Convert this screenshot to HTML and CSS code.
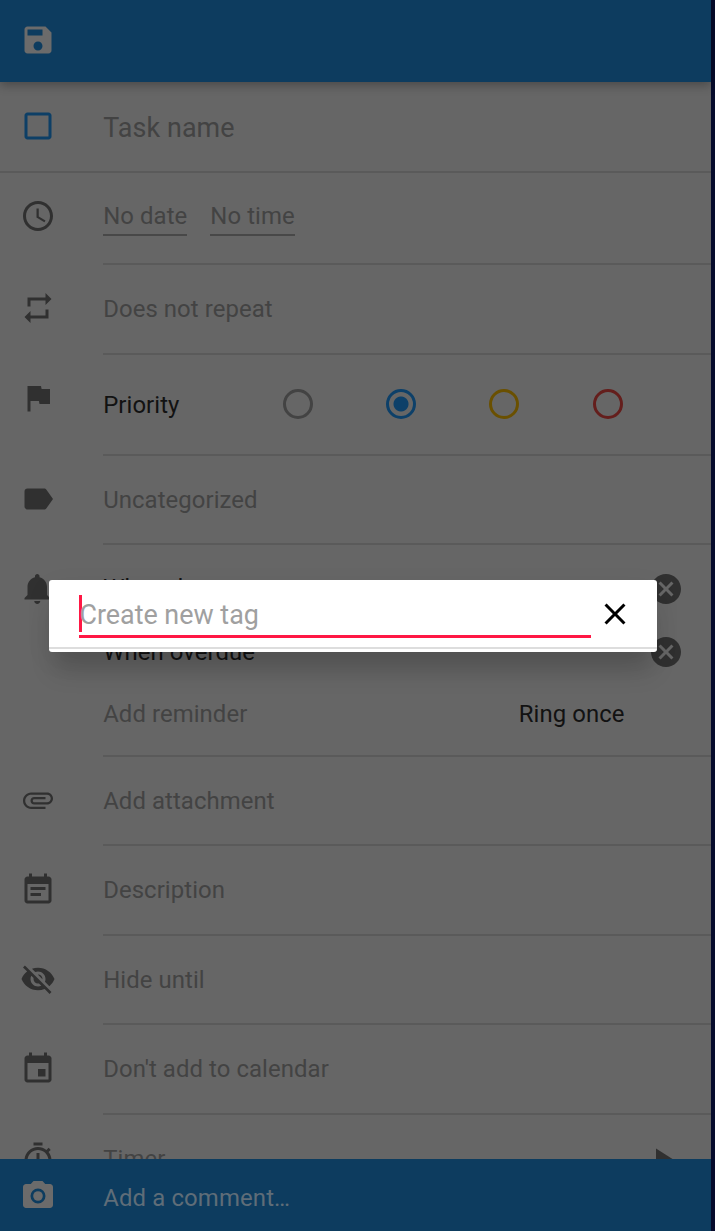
FILE: index.html
```html
<!DOCTYPE html>
<html lang="en">
<head>
<meta charset="utf-8">
<title>Task</title>
<link rel="stylesheet" href="styles.css">
</head>
<body>
<div class="screen">
  <header class="toolbar">
    <svg class="icon light" viewBox="0 0 24 24"><path d="M17 3H5c-1.110 0-2 .9-2 2v14c0 1.100.89 2 2 2h14c1.100 0 2-.9 2-2V7l-4-4zm-5 16c-1.660 0-3-1.340-3-3s1.340-3 3-3 3 1.340 3 3-1.340 3-3 3zm3-10H5V5h10v4z"/></svg>
  </header>
  <main class="rows">
    <section class="row title">
      <svg class="icon blue" viewBox="0 0 24 24"><path d="M19 5v14H5V5h14m0-2H5c-1.100 0-2 .9-2 2v14c0 1.100.9 2 2 2h14c1.100 0 2-.9 2-2V5c0-1.100-.9-2-2-2z"/></svg>
      <div class="cell"><span class="task-name">Task name</span></div>
    </section>
    <section class="row due">
      <svg class="icon" viewBox="0 0 24 24"><path d="M11.990 2C6.470 2 2 6.480 2 12s4.470 10 9.990 10C17.520 22 22 17.520 22 12S17.520 2 11.990 2zM12 20c-4.420 0-8-3.580-8-8s3.580-8 8-8 8 3.580 8 8-3.580 8-8 8zm.5-13H11v6l5.250 3.150.75-1.230-4.500-2.670z"/></svg>
      <div class="cell"><span class="underlined">No date</span><span class="underlined">No time</span></div>
    </section>
    <section class="row repeat">
      <svg class="icon" viewBox="0 0 24 24"><path d="M7 7h10v3l4-4-4-4v3H5v6h2V7zm10 10H7v-3l-4 4 4 4v-3h12v-6h-2v4z"/></svg>
      <div class="cell"><span class="hint">Does not repeat</span></div>
    </section>
    <section class="row priority">
      <svg class="icon" viewBox="0 0 24 24"><path d="M14.400 6L14 4H5v17h2v-7h5.600l.4 2h7V6z"/></svg>
      <div class="cell"><span class="strong">Priority</span>
        <div class="radios"><i class="radio none"></i><i class="radio low"></i><i class="radio medium"></i><i class="radio high"></i></div>
      </div>
    </section>
    <section class="row tag">
      <svg class="icon" viewBox="0 0 24 24"><path d="M17.630 5.840C17.270 5.330 16.670 5 16 5L5 5.010C3.900 5.010 3 5.900 3 7v10c0 1.100.9 1.990 2 1.990L16 19c.67 0 1.270-.33 1.630-.84L22 12l-4.370-6.160z"/></svg>
      <div class="cell"><span class="hint">Uncategorized</span></div>
    </section>
    <section class="row reminders">
      <svg class="icon" viewBox="0 0 24 24"><path d="M11.500 22c1.100 0 2-.9 2-2h-4c0 1.100.9 2 2 2zm6.500-6v-5.500c0-3.070-2.130-5.640-5-6.320V3.500c0-.83-.67-1.500-1.500-1.500S10 2.670 10 3.500v.68c-2.870.68-5 3.250-5 6.320V16l-2 2v1h17v-1l-2-2z"/></svg>
      <div class="cell">
        <div class="line"><span class="strong first">When due</span><svg class="icon" viewBox="0 0 24 24"><path d="M12 2C6.470 2 2 6.470 2 12s4.470 10 10 10 10-4.470 10-10S17.530 2 12 2zm5 13.590L15.590 17 12 13.410 8.410 17 7 15.590 10.590 12 7 8.410 8.410 7 12 10.590 15.590 7 17 8.410 13.410 12 17 15.590z"/></svg></div>
        <div class="line"><span class="strong">When overdue</span><svg class="icon" viewBox="0 0 24 24"><path d="M12 2C6.470 2 2 6.470 2 12s4.470 10 10 10 10-4.470 10-10S17.530 2 12 2zm5 13.590L15.590 17 12 13.410 8.410 17 7 15.590 10.590 12 7 8.410 8.410 7 12 10.590 15.590 7 17 8.410 13.410 12 17 15.590z"/></svg></div>
        <div class="line add"><span class="hint">Add reminder</span><span class="strong ring">Ring once</span></div>
      </div>
    </section>
    <section class="row attach">
      <svg class="icon" viewBox="0 0 24 24"><path d="M2 12.500C2 9.460 4.460 7 7.500 7H18c2.210 0 4 1.790 4 4s-1.790 4-4 4H9.500C8.120 15 7 13.880 7 12.500S8.120 10 9.500 10H17v1.500H9.500c-.55 0-1 .45-1 1s.45 1 1 1H18c1.380 0 2.500-1.120 2.500-2.500S19.380 8.500 18 8.500H7.500c-2.210 0-4 1.790-4 4s1.790 4 4 4H17V18H7.500C4.460 18 2 15.540 2 12.500z"/></svg>
      <div class="cell"><span class="hint">Add attachment</span></div>
    </section>
    <section class="row description">
      <svg class="icon" viewBox="0 0 24 24"><path d="M17 10H7v2h10v-2zm2-7h-1V1h-2v2H8V1H6v2H5c-1.110 0-1.990.9-1.990 2L3 19c0 1.100.89 2 2 2h14c1.100 0 2-.9 2-2V5c0-1.100-.9-2-2-2zm0 16H5V8h14v11zm-5-5H7v2h7v-2z"/></svg>
      <div class="cell"><span class="hint">Description</span></div>
    </section>
    <section class="row hide">
      <svg class="icon" viewBox="0 0 24 24"><path d="M12 7c2.760 0 5 2.240 5 5 0 .65-.13 1.260-.36 1.830l2.920 2.920c1.510-1.260 2.700-2.890 3.430-4.750-1.730-4.390-6-7.500-11-7.500-1.400 0-2.740.25-3.980.7l2.160 2.160C10.740 7.130 11.350 7 12 7zM2 4.270l2.280 2.280.46.46C3.080 8.300 1.780 10.020 1 12c1.730 4.390 6 7.500 11 7.500 1.550 0 3.030-.3 4.380-.84l.42.42L19.730 22 21 20.730 3.270 3 2 4.270zM7.530 9.800l1.550 1.550c-.05.21-.08.43-.08.65 0 1.660 1.340 3 3 3 .22 0 .44-.03.65-.08l1.550 1.550c-.67.33-1.410.53-2.200.53-2.760 0-5-2.240-5-5 0-.79.2-1.530.53-2.200zm4.310-.78l3.150 3.150.02-.16c0-1.660-1.340-3-3-3l-.17.01z"/></svg>
      <div class="cell"><span class="hint">Hide until</span></div>
    </section>
    <section class="row calendar">
      <svg class="icon" viewBox="0 0 24 24"><path d="M17 12h-5v5h5v-5zM16 1v2H8V1H6v2H5c-1.110 0-1.990.9-1.990 2L3 19c0 1.100.89 2 2 2h14c1.100 0 2-.9 2-2V5c0-1.100-.9-2-2-2h-1V1h-2zm3 18H5V8h14v11z"/></svg>
      <div class="cell"><span class="hint">Don't add to calendar</span></div>
    </section>
    <section class="row timer">
      <svg class="icon" viewBox="0 0 24 24"><path d="M15 1H9v2h6V1zm-4 13h2V8h-2v6zm8.030-6.610l1.420-1.420c-.43-.51-.9-.99-1.410-1.410l-1.420 1.420C16.070 4.740 14.120 4 12 4c-4.970 0-9 4.030-9 9s4.020 9 9 9 9-4.030 9-9c0-2.120-.74-4.070-1.970-5.610zM12 20c-3.870 0-7-3.130-7-7s3.130-7 7-7 7 3.130 7 7-3.130 7-7 7z"/></svg>
      <div class="cell"><span class="hint">Timer</span><svg class="icon play" viewBox="0 0 24 24"><path d="M8 5v14l11-7z"/></svg></div>
    </section>
  </main>
  <footer class="comment">
    <svg class="icon light" viewBox="0 0 24 24"><path fill-rule="evenodd" d="M9 2L7.170 4H4c-1.100 0-2 .9-2 2v12c0 1.100.9 2 2 2h16c1.100 0 2-.9 2-2V6c0-1.100-.9-2-2-2h-3.170L15 2H9zm3 15a5 5 0 1 1 0-10 5 5 0 0 1 0 10z"/><circle cx="12" cy="12" r="3.200"/></svg>
    <span>Add a comment…</span>
  </footer>
</div>
<div class="dialog">
  <div class="field"><i class="caret"></i><span>Create new tag</span></div>
  <svg class="close" viewBox="0 0 24 24"><path d="M19 6.410L17.590 5 12 10.590 6.410 5 5 6.410 10.590 12 5 17.590 6.410 19 12 13.410 17.590 19 19 17.590 13.410 12z"/></svg>
</div>
</body>
</html>
```
FILE: styles.css
```css
* { box-sizing: border-box; }
body {
  margin: 0;
  width: 715px;
  height: 1231px;
  overflow: hidden;
  background: #060b2c;
  font-family: Roboto, sans-serif;
  font-size: 23.9px;
  line-height: 30px;
  letter-spacing: .08px;
  color: #434343;
}
.screen {
  width: 711px;
  height: 1231px;
  display: flex;
  flex-direction: column;
  background: #666;
}
.icon {
  display: block;
  flex: none;
  width: 36px;
  height: 36px;
  fill: #303030;
}
.icon.light { fill: #6b6b6b; }
.icon.blue { fill: #0d3f66; }

.toolbar {
  flex: none;
  height: 82px;
  padding: 22.400px 19.700px 0;
  background: #0d3c5f;
  box-shadow: 0 3px 10px rgba(0, 0, 0, .3);
  z-index: 1;
}
.rows { flex: 1; min-height: 0; overflow: hidden; }
.row {
  display: grid;
  grid-template-columns: 36px 1fr;
  column-gap: 47.500px;
  padding-left: 19.700px;
  height: 90px;
}
.row > .icon { margin-top: 26px; }
.cell {
  display: flex;
  align-items: flex-start;
  padding-top: 29px;
  border-bottom: 2px solid #5a5a5a;
}
.strong { color: #121212; }

.title { height: 91px; border-bottom: 2px solid #5a5a5a; }
.title .cell { border: 0; padding-top: 31px; }
.task-name { font-size: 26.9px; }
.due { height: 92px; }
.due > .icon { margin-top: 25px; }
.due .cell { gap: 23px; padding-top: 28px; }
.underlined { height: 35px; border-bottom: 2px solid #484848; }
.priority { height: 101px; }
.priority > .icon { margin-top: 25px; }
.priority .cell { padding-top: 35px; }
.priority .strong { width: 179.500px; }
.radios { display: flex; gap: 73.300px; }
.radio {
  width: 30px;
  height: 30px;
  margin-top: -1px;
  border: 3px solid;
  border-radius: 50%;
  color: #434343;
}
.radio.low {
  color: #0d4069;
  background: radial-gradient(circle, currentColor 7px, transparent 8px);
}
.radio.medium { color: #6a5000; }
.radio.high { color: #641e1c; }
.tag, .attach, .hide { height: 89px; }
.repeat > .icon, .tag > .icon, .attach > .icon, .hide > .icon { margin-top: 25.400px; }
.reminders { height: 212px; }
.reminders .cell { display: block; padding-top: 26px; }
.line {
  display: flex;
  justify-content: space-between;
  align-items: center;
  height: 36px;
  margin-bottom: 26.500px;
  padding-right: 27px;
}
.line.add { padding-right: 86.500px; margin-bottom: 0; }
.first { margin-bottom: 2px; }
.calendar { height: 90px; }
.timer .cell { justify-content: space-between; padding-right: 31px; }
.play { margin-top: -3px; }

.comment {
  flex: none;
  height: 72px;
  display: flex;
  align-items: flex-start;
  gap: 47.500px;
  padding: 19px 19.700px 0;
  background: #0d3c5f;
  color: #5f6d78;
}
.comment span { padding-top: 5px; letter-spacing: .14px; }

.dialog {
  position: absolute;
  left: 49.400px;
  top: 580px;
  width: 608px;
  height: 72px;
  display: flex;
  padding: 15px 24px 0 30px;
  background: linear-gradient(#fff 67px, #ddd 67px, #ddd 69px, #fff 69px);
  border-radius: 3px;
  box-shadow: 0 24px 24px -6px rgba(0, 0, 0, .17), 0 8px 28px rgba(0, 0, 0, .06);
}
.field {
  display: flex;
  width: 512px;
  height: 43px;
  padding-top: 5px;
  border-bottom: 3px solid #ff1744;
  font-size: 26.900px;
  letter-spacing: 0;
  color: #a0a0a0;
}
.caret {
  width: 3px;
  height: 37px;
  margin: -5px -3px 0 0;
  background: #ff1744;
}
.close {
  width: 36px;
  height: 36px;
  margin: 1px 0 0 6px;
}
```
